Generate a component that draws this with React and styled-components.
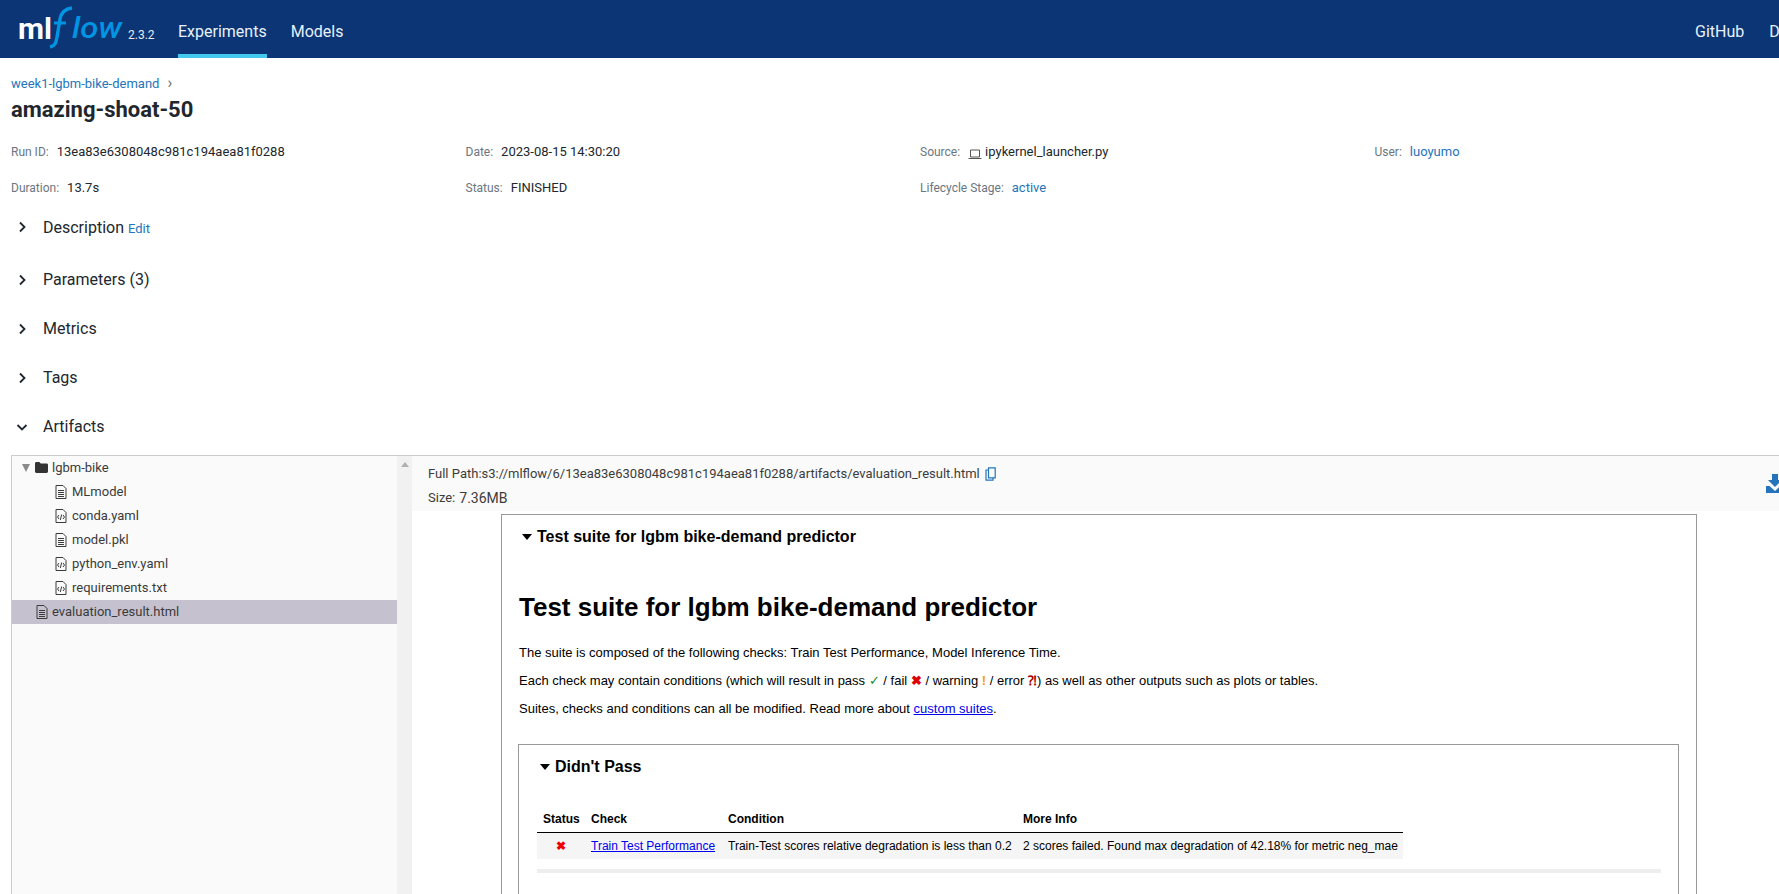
import React from 'react';
import styled, { createGlobalStyle } from 'styled-components';

const Global = createGlobalStyle`
  html, body { margin: 0; padding: 0; height: 894px; overflow: hidden; background: #fff; }
  body { font-family: Roboto, "Liberation Sans", sans-serif; color: #333; }
  #root { width: 1860px; }
  * { box-sizing: border-box; }
`;

const Page = styled.div`
  width: 1860px;
  height: 894px;
  overflow: hidden;
`;

const Header = styled.header`
  height: 58px;
  background: #0b3574;
  display: flex;
  align-items: stretch;
`;
const LogoBox = styled.div`
  width: 178px;
  display: flex;
  align-items: flex-start;
  padding-left: 18px;
  position: relative;
`;
const Version = styled.span`
  position: absolute;
  left: 128px;
  top: 28px;
  font-size: 12px;
  color: #e4ebf5;
`;
const NavLink = styled.a`
  display: flex;
  align-items: center;
  height: 58px;
  padding-top: 8px;
  font-size: 16px;
  color: #e7f1fb;
  border-bottom: 4px solid ${p => (p.$active ? '#43c9ed' : 'transparent')};
  margin-right: ${p => p.$gap || 0}px;
`;
const NavRight = styled.nav`
  margin-left: auto;
  display: flex;
  width: 165px;
`;

const Content = styled.main`
  padding: 17px 0 0 11px;
`;
const Breadcrumb = styled.div`
  display: flex;
  align-items: center;
  gap: 8px;
  height: 16px;
  font-size: 13px;
  color: #2374bb;
`;
const Chevron = styled.span`
  color: #6b6b6b;
  font-size: 16px;
  line-height: 16px;
`;
const Title = styled.h1`
  margin: 4px 0 0;
  height: 30px;
  line-height: 30px;
  font-size: 22px;
  font-weight: 700;
  color: #1f272d;
`;
const MetaGrid = styled.div`
  display: grid;
  grid-template-columns: repeat(4, 454.5px);
  grid-auto-rows: 36px;
  margin-top: 19px;
`;
const MetaItem = styled.div`
  display: flex;
  align-items: baseline;
  height: 20px;
  font-size: 13px;
  color: #20272e;
`;
const MetaLabel = styled.span`
  font-size: 12px;
  color: #6b7680;
  margin-right: 8px;
`;
const MetaLink = styled.a`
  color: #2374bb;
`;
const SourceValue = styled.span`
  margin-left: 3px;
`;
const LaptopSlot = styled.span`
  align-self: center;
  display: flex;
`;
const Sections = styled.div`
  margin-top: -17px;
`;
const SectionHead = styled.div`
  display: flex;
  align-items: center;
  height: ${p => p.$h || 49}px;
  font-size: 16px;
  color: #20272e;
`;
const SectionIcon = styled.span`
  width: 32px;
  padding-left: 4px;
  display: flex;
  align-items: center;
`;
const EditLink = styled.a`
  font-size: 13px;
  color: #2374bb;
  margin-left: 4px;
  padding-top: 2px;
`;

const Artifacts = styled.div`
  display: flex;
  margin-top: 4px;
  height: 440px;
  border-top: 1px solid #ccc;
  border-left: 1px solid #ccc;
`;
const TreePane = styled.div`
  width: 385px;
  background: #fafafa;
  font-size: 13px;
  color: #3b3b3b;
`;
const TreeRow = styled.div`
  display: flex;
  align-items: center;
  height: 24px;
  padding-bottom: 1px;
  gap: ${p => p.$gap || 5}px;
  padding-left: ${p => p.$indent}px;
  background: ${p => (p.$selected ? '#c5c1cf' : 'transparent')};
`;
const Caret = styled.span`
  width: 0;
  height: 0;
  margin-right: 1px;
  border-left: 4px solid transparent;
  border-right: 4px solid transparent;
  border-top: 8px solid #8a8a8a;
`;
const Scrollbar = styled.div`
  width: 15px;
  background: #f1f1f1;
  display: flex;
  justify-content: center;
  padding-top: 6px;
`;
const ScrollUp = styled.span`
  width: 0;
  height: 0;
  border-left: 4px solid transparent;
  border-right: 4px solid transparent;
  border-bottom: 5px solid #b0b0b0;
`;
const Viewer = styled.div`
  flex: 1;
  min-width: 0;
`;
const ViewerHead = styled.div`
  height: 55px;
  background: #fafafa;
  padding: 9px 0 0 16px;
  font-size: 13px;
  color: #3c3c3c;
  position: relative;
`;
const PathLine = styled.div`
  display: flex;
  align-items: center;
  height: 17px;
`;
const SizeLine = styled.div`
  display: flex;
  align-items: center;
  height: 17px;
  margin-top: 7px;
`;
const SizeValue = styled.span`
  font-size: 14px;
  margin-left: 4px;
`;
const CopyBtn = styled.span`
  display: flex;
  margin-left: 5px;
`;
const Download = styled.span`
  position: absolute;
  left: 1354px;
  top: 18px;
  display: flex;
`;

const Report = styled.div`
  width: 1196px;
  margin: 3px 0 0 89px;
  height: 500px;
  border: 1px solid #999;
  border-bottom: 0;
  padding: 0 17px 0 16px;
  font-family: "Liberation Sans", Arial, sans-serif;
  color: #000;
`;
const Summary = styled.div`
  display: flex;
  align-items: center;
  font-weight: 700;
  font-size: ${p => p.$size}px;
  height: 20px;
  margin: ${p => p.$margin};
`;
const SummaryMark = styled.span`
  width: 0;
  height: 0;
  margin-right: 5px;
  border-left: 5px solid transparent;
  border-right: 5px solid transparent;
  border-top: 6px solid #000;
`;
const H1 = styled.h1`
  margin: 42px 0 0 1px;
  height: 36px;
  line-height: 36px;
  font-size: 26px;
  font-weight: 700;
`;
const Para = styled.p`
  margin: 0;
  height: 28px;
  line-height: 28px;
  font-size: 13px;
`;
const Lead = styled.div`
  margin: 14px 0 0 1px;
`;
const Blue = styled.a`
  color: #00e;
  text-decoration: underline;
`;
const Mark = styled.span`
  color: ${p => p.$c};
  font-weight: ${p => (p.$b ? 700 : 400)};
`;
const Inner = styled.div`
  margin-top: 21px;
  height: 300px;
  border: 1px solid #999;
  border-bottom: 0;
  padding: 0 15px 0 18px;
`;
const Table = styled.table`
  border-collapse: collapse;
  margin-top: 29px;
  width: 866px;
  font-size: 12px;
  table-layout: fixed;
`;
const Th = styled.th`
  text-align: left;
  height: 26px;
  padding: 0 6px;
  border-bottom: 1px solid #000;
  font-size: 12px;
  white-space: nowrap;
`;
const Tr = styled.tr`
  background: #f5f5f5;
`;
const Td = styled.td`
  height: 27px;
  padding: 0 6px;
  white-space: nowrap;
  text-align: ${p => (p.$center ? 'center' : 'left')};
`;
const Rule = styled.div`
  height: 4px;
  margin-top: 10px;
  width: 1124px;
  background: #eee;
`;

const Right = () => (
  <svg width="14" height="14" viewBox="0 0 14 14"><path d="M5 2.500 9.500 7 5 11.500" fill="none" stroke="#20272e" strokeWidth="1.8" /></svg>
);
const Down = () => (
  <svg width="14" height="14" viewBox="0 0 14 14"><path d="M2.500 5 7 9.500 11.500 5" fill="none" stroke="#20272e" strokeWidth="1.8" /></svg>
);
const FileIcon = () => (
  <svg width="12" height="14" viewBox="0 0 12 14" fill="none" stroke="#3b3b3b">
    <path d="M1 .5h7l3 3v10H1z" />
    <path d="M3 5.500h6M3 7.500h6M3 9.500h6M3 11.500h6" />
  </svg>
);
const CodeIcon = () => (
  <svg width="12" height="14" viewBox="0 0 12 14" fill="none" stroke="#3b3b3b">
    <path d="M1 .5h7l3 3v10H1z" />
    <path d="M4 6 2.500 8 4 10M8 6l1.500 2L8 10M6.700 5.500 5.300 11" strokeWidth="1" />
  </svg>
);
const FolderIcon = () => (
  <svg width="13" height="11" viewBox="0 0 13 11"><path d="M0 1.500C0 .7.600 0 1.400 0h3l1.300 1.500h5.900c.8 0 1.400.6 1.400 1.400v6.700c0 .8-.6 1.400-1.400 1.400H1.400C.6 11 0 10.400 0 9.600z" fill="#333" /></svg>
);
const LaptopIcon = () => (
  <svg width="14" height="11" viewBox="0 0 14 11" fill="none" stroke="#555"><path d="M2.500 1h9v7h-9zM.5 9.500h13" /></svg>
);
const CopyIcon = () => (
  <svg width="11" height="14" viewBox="0 0 11 14" fill="none" stroke="#2374bb" strokeWidth="1.2">
    <path d="M3.500.8h6.700v10H3.500z" />
    <path d="M3.500 3H1v10.200h7v-2.400" />
  </svg>
);
const DownloadIcon = () => (
  <svg width="18" height="19" viewBox="0 0 18 19"><path d="M6 0h6v6h4l-7 7-7-7h4zM0 12h3.500L9 17l5.500-5H18v7H0z" fill="#2374bb" /></svg>
);
const Logo = () => (
  <svg width="110" height="50" viewBox="0 0 110 50" style={{ display: 'block' }}>
    <text x="0" y="39" fontFamily="Roboto, sans-serif" fontWeight="700" fontSize="30" fill="#fff">ml</text>
    <path d="M32 47c5-1 6-4 7-10l3-18c1-6 4-10 12-11" fill="none" stroke="#0194e2" strokeWidth="3.400" />
    <path d="M36 23h12" fill="none" stroke="#0194e2" strokeWidth="3" />
    <text x="54" y="38" fontFamily="Roboto, sans-serif" fontStyle="italic" fontWeight="500" fontSize="30" fill="#0194e2" textLength="50" lengthAdjust="spacingAndGlyphs">low</text>
  </svg>
);

const rows = [
  ['Run ID:', '13ea83e6308048c981c194aea81f0288'],
  ['Date:', '2023-08-15 14:30:20'],
  ['Source:', 'ipykernel_launcher.py', 'source'],
  ['User:', 'luoyumo', 'link'],
  ['Duration:', '13.7s'],
  ['Status:', 'FINISHED'],
  ['Lifecycle Stage:', 'active', 'link'],
];

const children = [
  ['MLmodel', FileIcon],
  ['conda.yaml', CodeIcon],
  ['model.pkl', FileIcon],
  ['python_env.yaml', CodeIcon],
  ['requirements.txt', CodeIcon],
];

function MetaValue({ value, kind }) {
  if (kind === 'link') return <MetaLink>{value}</MetaLink>;
  if (kind === 'source') {
    return (
      <>
        <LaptopSlot><LaptopIcon /></LaptopSlot>
        <SourceValue>{value}</SourceValue>
      </>
    );
  }
  return <span>{value}</span>;
}

export default function App() {
  return (
    <Page>
      <Global />
      <Header>
        <LogoBox>
          <Logo />
          <Version>2.3.2</Version>
        </LogoBox>
        <NavLink $active $gap={24}>Experiments</NavLink>
        <NavLink>Models</NavLink>
        <NavRight>
          <NavLink $gap={25}>GitHub</NavLink>
          <NavLink>Docs</NavLink>
        </NavRight>
      </Header>
      <Content>
        <Breadcrumb>week1-lgbm-bike-demand <Chevron>›</Chevron></Breadcrumb>
        <Title>amazing-shoat-50</Title>
        <MetaGrid>
          {rows.map(([label, value, kind]) => (
            <MetaItem key={label}>
              <MetaLabel>{label}</MetaLabel>
              <MetaValue value={value} kind={kind} />
            </MetaItem>
          ))}
        </MetaGrid>
        <Sections>
          <SectionHead $h={56}><SectionIcon><Right /></SectionIcon>Description<EditLink>Edit</EditLink></SectionHead>
          <SectionHead><SectionIcon><Right /></SectionIcon>Parameters (3)</SectionHead>
          <SectionHead><SectionIcon><Right /></SectionIcon>Metrics</SectionHead>
          <SectionHead><SectionIcon><Right /></SectionIcon>Tags</SectionHead>
          <SectionHead><SectionIcon><Down /></SectionIcon>Artifacts</SectionHead>
        </Sections>
        <Artifacts>
          <TreePane>
            <TreeRow $indent={10} $gap={4}><Caret /><FolderIcon /><span>lgbm-bike</span></TreeRow>
            {children.map(([name, Icon]) => (
              <TreeRow key={name} $indent={43}><Icon /><span>{name}</span></TreeRow>
            ))}
            <TreeRow $indent={24} $gap={4} $selected><FileIcon /><span>evaluation_result.html</span></TreeRow>
          </TreePane>
          <Scrollbar><ScrollUp /></Scrollbar>
          <Viewer>
            <ViewerHead>
              <PathLine>
                Full Path:s3://mlflow/6/13ea83e6308048c981c194aea81f0288/artifacts/evaluation_result.html
                <CopyBtn><CopyIcon /></CopyBtn>
              </PathLine>
              <SizeLine>Size: <SizeValue>7.36MB</SizeValue></SizeLine>
              <Download><DownloadIcon /></Download>
            </ViewerHead>
            <Report>
              <Summary $size={16} $margin="12px 0 0 4px"><SummaryMark />Test suite for lgbm bike-demand predictor</Summary>
              <H1>Test suite for lgbm bike-demand predictor</H1>
              <Lead>
                <Para>The suite is composed of the following checks: Train Test Performance, Model Inference Time.</Para>
                <Para>Each check may contain conditions (which will result in pass <Mark $c="#228b22">✓</Mark> / fail <Mark $c="#d00" $b>✖</Mark> / warning <Mark $c="#f90" $b>!</Mark> / error <Mark $c="#a00" $b>⁈</Mark>) as well as other outputs such as plots or tables.</Para>
                <Para>Suites, checks and conditions can all be modified. Read more about <Blue>custom suites</Blue>.</Para>
              </Lead>
              <Inner>
                <Summary $size={16} $margin="12px 0 0 3px"><SummaryMark />Didn't Pass</Summary>
                <Table>
                  <colgroup>
                    <col width="48" />
                    <col width="137" />
                    <col width="295" />
                    <col width="386" />
                  </colgroup>
                  <thead>
                    <tr>
                      <Th>Status</Th>
                      <Th>Check</Th>
                      <Th>Condition</Th>
                      <Th>More Info</Th>
                    </tr>
                  </thead>
                  <tbody>
                    <Tr>
                      <Td $center><Mark $c="#e00" $b>✖</Mark></Td>
                      <Td><Blue>Train Test Performance</Blue></Td>
                      <Td>Train-Test scores relative degradation is less than 0.2</Td>
                      <Td>2 scores failed. Found max degradation of 42.18% for metric neg_mae</Td>
                    </Tr>
                  </tbody>
                </Table>
                <Rule />
              </Inner>
            </Report>
          </Viewer>
        </Artifacts>
      </Content>
    </Page>
  );
}
